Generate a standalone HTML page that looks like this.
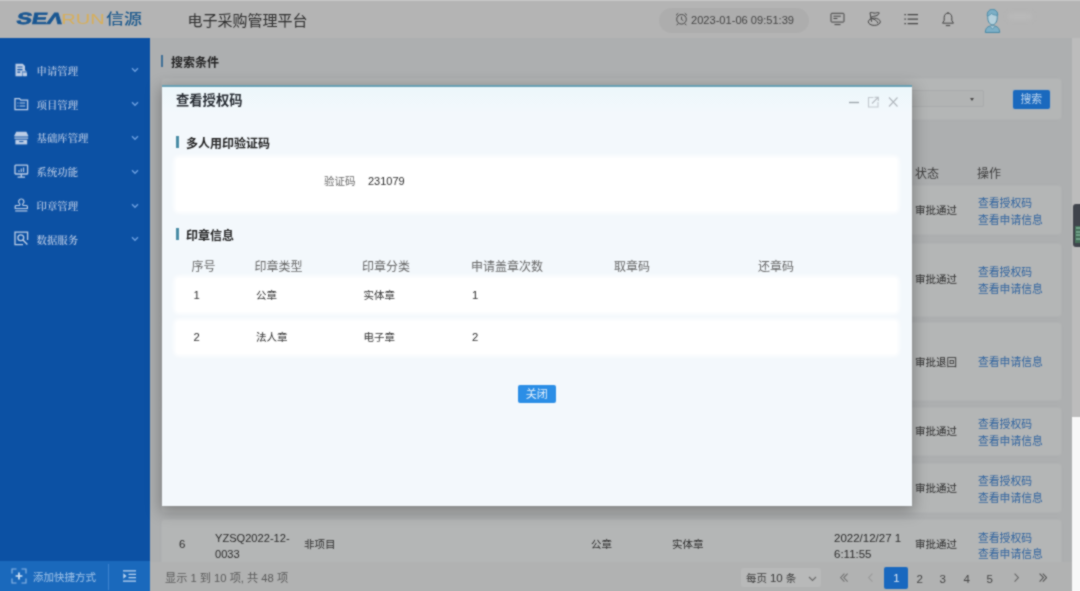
<!DOCTYPE html>
<html lang="zh-CN">
<head>
<meta charset="utf-8">
<title>电子采购管理平台</title>
<style>
*{box-sizing:border-box;margin:0;padding:0}
html,body{width:1080px;height:591px;overflow:hidden}
body{position:relative;background:#adafb0;font-family:"Liberation Sans","Noto Sans CJK SC",sans-serif;font-size:11px;color:#2a2a2a;filter:url(#soft)}
.abs{position:absolute}
/* header */
#hdr{position:absolute;left:0;top:0;width:1080px;height:38px;background:#b4b4b4;border-top:1px solid #c8c8c8}
#logo{position:absolute;left:15px;top:6px;height:24px;white-space:nowrap}
#ptitle{position:absolute;left:187.5px;top:8px;font-size:15px;color:#2e2e2e}
#clock{position:absolute;left:659px;top:6.5px;width:150px;height:25px;border-radius:13px;background:#adadad}
#clock span{position:absolute;left:32px;top:6.2px;font-size:11.1px;color:#444}
/* sidebar */
#side{position:absolute;left:0;top:38px;width:150px;height:553px;background:#0c51a4}
.mi{position:absolute;left:0;width:150px;height:20px;color:#b2c5e2;font-size:10.4px;font-family:"Liberation Serif","Noto Serif CJK SC",serif;font-weight:600}
.mi span{position:absolute;left:36.5px;top:2.5px;white-space:nowrap}
.mi svg.ic{position:absolute;left:14px;top:2px}
.mi svg.ch{position:absolute;left:131px;top:7px}
#sbot{position:absolute;left:0;top:522.6px;width:150px;height:31px;background:#1a69bc}
/* main bg */
.card{position:absolute;background:#b4b6b6;border-radius:3px;box-shadow:0 0 2px 1px rgba(180,182,182,.6)}
.th2{font-size:12px;color:#3d3d3d}
.st{font-size:10.5px;color:#2b2b2b;white-space:nowrap}
.lk{font-size:10.8px;color:#2f639f;line-height:16.8px;white-space:nowrap}
.pg{top:568px;width:12px;text-align:center;font-size:15px;color:#444}
/* modal */
#modal{position:absolute;left:161.5px;top:84.5px;width:750px;height:421.3px;background:linear-gradient(#ecf7fb 0,#f3f8fc 26px);border-top:2px solid #68a0b4;box-shadow:0 4px 14px 2px rgba(0,0,0,.28)}
.sec{position:absolute;font-weight:bold;font-size:12px;color:#1f1f1f}
.bar{position:absolute;width:2.5px;height:12px;background:#4a8da6}
.white{position:absolute;background:#fff;border-radius:3px;box-shadow:0 0 4px 1.5px #fff}
.th{position:absolute;font-size:12px;color:#666}
.td{position:absolute;font-size:10.5px;color:#2e2e2e;line-height:14px}
</style>
</head>
<body>
<svg width="0" height="0" style="position:absolute"><filter id="soft" x="0" y="0" width="100%" height="100%" color-interpolation-filters="sRGB"><feConvolveMatrix order="3" kernelMatrix="1 2 1 2 8 2 1 2 1" divisor="20" edgeMode="duplicate" preserveAlpha="true"/></filter></svg>
<div class="abs" style="left:0;top:0;width:1080px;height:591px;background:#adafb0"></div>
<div id="hdr">
  <svg id="logo" class="abs" style="left:12px;top:6px" width="140" height="26" viewBox="0 0 140 26">
    <text transform="translate(-1.8,18.6) skewX(-12)" x="0" y="0" font-family="Liberation Sans, sans-serif" font-weight="bold" font-size="17.5" fill="#1a5792" textLength="49.5" lengthAdjust="spacingAndGlyphs" stroke="#1a5792" stroke-width=".8">SEΛ</text>
    <text x="47.5" y="18.3" font-family="Liberation Sans, sans-serif" font-size="16.5" fill="#dcae4e" textLength="47" lengthAdjust="spacingAndGlyphs" opacity=".88">RUN</text>
    <text x="96" y="18.6" font-family="Liberation Sans, Noto Sans CJK SC, sans-serif" font-size="15.500" font-weight="500" fill="#1d5a8e" textLength="39" lengthAdjust="spacingAndGlyphs">信源</text>
  </svg>
  <div id="ptitle">电子采购管理平台</div>
  <div id="clock"><span>2023-01-06 09:51:39</span></div>
  <svg class="abs" style="left:675px;top:11px" width="13" height="14" viewBox="0 0 13 14"><circle cx="6.500" cy="7.300" r="4.800" fill="none" stroke="#484848" stroke-width="1"/><path d="M6.500 4.600v2.900l1.900 1.200" fill="none" stroke="#484848" stroke-width=".9"/><path d="M1 3.300l2.200-2M12 3.300l-2.200-2M3 11.600l-1.200 1.600M10 11.600l1.200 1.600" stroke="#484848" stroke-width="1"/></svg>
  <svg class="abs" style="left:830px;top:11px" width="15" height="14" viewBox="0 0 15 14"><rect x="1" y="1.300" width="13" height="8.800" rx=".8" fill="none" stroke="#444" stroke-width="1"/><path d="M3.400 4.200h7.400M3.400 6.500h4" stroke="#444" stroke-width="1"/><path d="M4.500 12.600h6" stroke="#444" stroke-width="1"/></svg>
  <svg class="abs" style="left:867px;top:10px" width="15" height="16" viewBox="0 0 15 16"><ellipse cx="7.300" cy="10.800" rx="6" ry="3.600" fill="none" stroke="#444" stroke-width="1"/><path d="M4.600 10.800L3 1.800" stroke="#444" stroke-width="1"/><path d="M3 1.800c2-1 3.400.8 5.400.3s2.800-.8 3.800-.3c-.5 1.800-1.600 2.600-3.200 3s-3.600.6-5.200 1.500" fill="none" stroke="#444" stroke-width="1"/><path d="M5.400 7.800c2.400.4 4.600 1.800 5.600 4.600" fill="none" stroke="#444" stroke-width="1"/></svg>
  <svg class="abs" style="left:904px;top:12px" width="14" height="12" viewBox="0 0 14 12"><path d="M3.600 1.500H14M3.600 6H14M3.600 10.500H14" stroke="#444" stroke-width="1.25"/><path d="M.4 1.500h1.500M.4 6h1.500M.4 10.500h1.500" stroke="#444" stroke-width="1.25"/></svg>
  <svg class="abs" style="left:941px;top:10px" width="14" height="16" viewBox="0 0 14 16"><path d="M7 2.200c-2.400 0-3.800 1.800-3.800 4.200v3L1.600 12.200h10.800L10.800 9.400v-3c0-2.400-1.400-4.200-3.800-4.200z" fill="none" stroke="#444" stroke-width="1"/><path d="M7 2.200V1M4.800 14.600h4.400" stroke="#444" stroke-width="1"/></svg>
  <svg class="abs" style="left:984px;top:7px" width="17" height="26" viewBox="0 0 17 26"><path d="M1.300 24.500c.2-4.600 2.300-6.600 7.200-6.600s7 2 7.200 6.600z" fill="#7dafc6" stroke="#4789a6" stroke-width="1"/><path d="M6 18.200l2.500 3 2.500-3" fill="#b4d0dc" stroke="#4789a6" stroke-width=".8"/><path d="M3.800 7.500C3.200 3.600 5.400 1.600 8.500 1.600s5.300 2 4.700 5.900c.5 5.600-1.600 9.200-4.700 9.200S3.300 13.100 3.800 7.500z" fill="#b4d0dc" stroke="#4789a6" stroke-width="1"/><path d="M3.200 7.800c1.800-.2 3.100-1 4.200-2.300 1.500 1.300 3.700 1.900 6.400 1.700C13.600 3.400 11.700 1.500 8.500 1.500S3 3.600 3.200 7.800z" fill="#7dafc6" stroke="#4789a6" stroke-width=".8"/></svg>
  <div class="abs" style="left:1008px;top:12px;width:24px;height:7px;background:#b9b9b9;filter:blur(2px);border-radius:3px"></div>
</div>
<div id="side">
  <div class="mi" style="top:22.0px"><svg class="ic" style="top:3.0px" width="14" height="14" viewBox="0 0 14 14"><path d="M1.5 0.8h7.2l2.3 2.3v5.2h-2.6v4.9H1.5z" fill="#bccde6"/><path d="M3.3 4h5.2M3.3 6.6h5.2M3.3 9.2h3" stroke="#0b4fa2" stroke-width="1.2"/><rect x="8.8" y="9.6" width="4.2" height="3.6" rx=".6" fill="#bccde6"/><path d="M9.8 9.6v-.9a1.1 1.1 0 0 1 2.2 0v.9" stroke="#bccde6" stroke-width=".9" fill="none"/></svg><span>申请管理</span><svg class="ch" width="8" height="6" viewBox="0 0 8 6"><path d="M1 1.200l3 3 3-3" fill="none" stroke="#6c9fe0" stroke-width="1.4"/></svg></div>
  <div class="mi" style="top:56.0px"><svg class="ic" style="top:2.5px" width="15" height="14" viewBox="0 0 15 14"><path d="M1 1.6h4.6l1.2 1.5H13.6v9.5H1z" fill="none" stroke="#bccde6" stroke-width="1.3"/><path d="M5.6 6h5.6M5.6 9h5.6" stroke="#bccde6" stroke-width="1.2"/><path d="M3.4 6h1M3.4 9h1" stroke="#bccde6" stroke-width="1.2"/></svg><span>项目管理</span><svg class="ch" width="8" height="6" viewBox="0 0 8 6"><path d="M1 1.200l3 3 3-3" fill="none" stroke="#6c9fe0" stroke-width="1.4"/></svg></div>
  <div class="mi" style="top:89.5px"><svg class="ic" style="top:3.0px" width="15" height="14" viewBox="0 0 15 14"><path d="M2.2 0.8h10.2l1.8 3.6v1.1H.4V4.4z" fill="#bccde6"/><path d="M.4 6.3h13.8v1.8H.4z" fill="#bccde6" opacity=".75"/><path d="M1.4 8.8h11.8v4.6H1.4z" fill="#bccde6"/><path d="M5.2 10.6h4.2" stroke="#0b4fa2" stroke-width="1"/></svg><span>基础库管理</span><svg class="ch" width="8" height="6" viewBox="0 0 8 6"><path d="M1 1.200l3 3 3-3" fill="none" stroke="#6c9fe0" stroke-width="1.4"/></svg></div>
  <div class="mi" style="top:123.5px"><svg class="ic" style="top:2.0px" width="15" height="15" viewBox="0 0 15 15"><rect x="1" y="1.2" width="12.6" height="8.8" rx=".6" fill="none" stroke="#bccde6" stroke-width="1.3"/><path d="M7.3 10v2.6M3.6 13.2h7.4" stroke="#bccde6" stroke-width="1.3"/><path d="M5 8V6.2M7.3 8V4.6M9.6 8V3.4" stroke="#bccde6" stroke-width="1.1"/></svg><span>系统功能</span><svg class="ch" width="8" height="6" viewBox="0 0 8 6"><path d="M1 1.200l3 3 3-3" fill="none" stroke="#6c9fe0" stroke-width="1.4"/></svg></div>
  <div class="mi" style="top:157.5px"><svg class="ic" style="top:2.3px" width="15" height="14" viewBox="0 0 15 14"><path d="M7.3 1a2.6 2.6 0 0 1 1.7 4.6c-.5.6-.4 1.6.2 1.9h3.2c.6 0 1 .4 1 1v2H1.200v-2c0-.6.4-1 1-1h3.2c.6-.3.7-1.300.2-1.900A2.600 2.600 0 0 1 7.300 1z" fill="none" stroke="#bccde6" stroke-width="1.2"/><path d="M1.200 12.900h12.200" stroke="#bccde6" stroke-width="1.200"/></svg><span>印章管理</span><svg class="ch" width="8" height="6" viewBox="0 0 8 6"><path d="M1 1.200l3 3 3-3" fill="none" stroke="#6c9fe0" stroke-width="1.4"/></svg></div>
  <div class="mi" style="top:191.0px"><svg class="ic" style="top:1.5px" width="15" height="15" viewBox="0 0 15 15"><path d="M13.600 9V1.200H1v12.400h8" fill="none" stroke="#bccde6" stroke-width="1.300"/><circle cx="6.800" cy="6.800" r="2.900" fill="none" stroke="#bccde6" stroke-width="1.300"/><path d="M9 9l4.400 4.600" stroke="#bccde6" stroke-width="1.400"/></svg><span>数据服务</span><svg class="ch" width="8" height="6" viewBox="0 0 8 6"><path d="M1 1.200l3 3 3-3" fill="none" stroke="#6c9fe0" stroke-width="1.4"/></svg></div>
  <div id="sbot"><svg class="abs" style="left:11px;top:7.5px" width="16" height="16" viewBox="0 0 16 16"><path d="M1 5.500V1h4.500M10.500 1H15v4.500M15 10.500V15h-4.500M5.500 15H1v-4.500" fill="none" stroke="#8fb8e6" stroke-width="1.100"/><path d="M8 4.600v6.800M4.600 8h6.800" stroke="#d4e4f6" stroke-width="1.700"/></svg><span class="abs" style="left:33px;top:8.5px;font-size:10.5px;color:#a3c4e8;white-space:nowrap">添加快捷方式</span><div class="abs" style="left:108px;top:3px;width:1px;height:26px;background:#3f83cf"></div><svg class="abs" style="left:123px;top:9.5px" width="13" height="12" viewBox="0 0 13 12"><path d="M0 .8h13M5.500 4.300H13M5.500 7.700H13M0 11.200h13" stroke="#bdd5f0" stroke-width="1.300"/><path d="M.3 3.300l3.300 2.700-3.300 2.700z" fill="#bdd5f0"/></svg></div>
</div>
<!-- background page content -->
<div id="main">
  <div class="abs" style="left:161px;top:55px;width:2px;height:12px;background:#3f6f96"></div>
  <div class="abs" style="left:171px;top:53px;font-size:12px;font-weight:bold;color:#232323">搜索条件</div>
  <div class="card" style="left:162px;top:79px;width:899px;height:40px"></div>
  <div class="abs" style="left:880px;top:90px;width:103.5px;height:17px;background:#b2b4b4;border:1px solid #a9abac;border-radius:2px"></div>
  <div class="abs" style="left:970px;top:98px;width:0;height:0;border-left:2.5px solid transparent;border-right:2.5px solid transparent;border-top:3.5px solid #484848"></div>
  <div class="abs" style="left:1012.5px;top:90px;width:37.5px;height:19px;background:#1a69be;border-radius:2px;color:#bcd4ee;font-size:10.8px;text-align:center;line-height:18.5px;box-shadow:0 0 2px rgba(120,170,230,.5)">搜索</div>
  <div class="abs th2" style="left:915px;top:164px">状态</div>
  <div class="abs th2" style="left:977px;top:164px">操作</div>
  <div class="card" style="left:162px;top:186px;width:899px;height:48px"></div>
  <div class="card" style="left:162px;top:243.5px;width:899px;height:72.5px"></div>
  <div class="card" style="left:162px;top:323px;width:899px;height:77px"></div>
  <div class="card" style="left:162px;top:407.5px;width:899px;height:47.5px"></div>
  <div class="card" style="left:162px;top:463.5px;width:899px;height:48.5px"></div>
  <div class="card" style="left:162px;top:519.5px;width:899px;height:50px"></div>
  <div class="abs st" style="left:915px;top:202px">审批通过</div>
  <div class="abs lk" style="left:978px;top:195px">查看授权码<br>查看申请信息</div>
  <div class="abs st" style="left:915px;top:271px">审批通过</div>
  <div class="abs lk" style="left:978px;top:264px">查看授权码<br>查看申请信息</div>
  <div class="abs st" style="left:915px;top:354px">审批退回</div>
  <div class="abs lk" style="left:978px;top:354px">查看申请信息</div>
  <div class="abs st" style="left:915px;top:423px">审批通过</div>
  <div class="abs lk" style="left:978px;top:416px">查看授权码<br>查看申请信息</div>
  <div class="abs st" style="left:915px;top:480px">审批通过</div>
  <div class="abs lk" style="left:978px;top:473px">查看授权码<br>查看申请信息</div>
  <div class="abs st" style="left:915px;top:536px">审批通过</div>
  <div class="abs lk" style="left:978px;top:529.5px">查看授权码<br>查看申请信息</div>
  <div class="abs st" style="left:179px;top:537.5px;font-size:11.5px">6</div>
  <div class="abs st" style="left:215px;top:531.3px;font-size:11.1px;line-height:15.2px">YZSQ2022-12-<br>0033</div>
  <div class="abs st" style="left:304px;top:536px">非项目</div>
  <div class="abs st" style="left:591px;top:536px">公章</div>
  <div class="abs st" style="left:672px;top:536px">实体章</div>
  <div class="abs st" style="left:834px;top:529.5px;font-size:11.5px;line-height:16px">2022/12/27 1<br>6:11:55</div>
  <!-- footer bar -->
  <div class="abs" style="left:150px;top:562px;width:922px;height:29px;background:#b1b2b2"></div>
  <div class="abs" style="left:165px;top:569px;font-size:11.2px;color:#5a5a5a;white-space:nowrap">显示 1 到 10 项, 共 48 项</div>
  <div class="abs" style="left:741px;top:568.3px;width:80.3px;height:18.6px;background:#b8b9b9;border-radius:2px"></div>
  <div class="abs" style="left:746px;top:570px;font-size:10.5px;color:#3a3a3a;white-space:nowrap">每页 <span style="font-size:11.5px">10</span> 条</div>
  <svg class="abs" style="left:807.500px;top:576px" width="9" height="6" viewBox="0 0 9 6"><path d="M1 1l3.500 3.500L8 1" fill="none" stroke="#6a6a6a" stroke-width="1.100"/></svg>
  <div class="abs" style="left:884.4px;top:567px;width:24px;height:22px;border-radius:2px;background:#1968bf;color:#dbe6f4;font-size:11.5px;text-align:center;line-height:23px">1</div>
  <svg class="abs" style="left:839.7px;top:573.4px" width="8" height="10" viewBox="0 0 8 10"><path d="M4.400 .6L.6 4.600l3.800 4M7.600 .6L3.800 4.600l3.800 4" fill="none" stroke="#737373" stroke-width="1.1"/></svg>
  <svg class="abs" style="left:868.2px;top:573.4px" width="5" height="10" viewBox="0 0 5 10"><path d="M4.400 .6L.6 4.600l3.800 4" fill="none" stroke="#999" stroke-width="1.1"/></svg>
  <svg class="abs" style="left:1013.5px;top:573.4px" width="5" height="10" viewBox="0 0 5 10"><path d="M.6 .6l3.8 4-3.8 4" fill="none" stroke="#666" stroke-width="1.1"/></svg>
  <svg class="abs" style="left:1039.2px;top:573.4px" width="8" height="10" viewBox="0 0 8 10"><path d="M.6 .6l3.8 4-3.8 4M3.8 .6l3.8 4-3.8 4" fill="none" stroke="#555" stroke-width="1.1"/></svg>
  <div class="abs pg" style="left:913.7px;font-size:11.5px;top:573px">2</div>
  <div class="abs pg" style="left:936.7px;font-size:11.5px;top:573px">3</div>
  <div class="abs pg" style="left:960.7px;font-size:11.5px;top:573px">4</div>
  <div class="abs pg" style="left:983.7px;font-size:11.5px;top:573px">5</div>
  <!-- scrollbar -->
  <div class="abs" style="left:1072px;top:38px;width:8px;height:553px;background:#f8f8f8"></div>
  <div class="abs" style="left:1072px;top:38px;width:8px;height:379px;background:#bcbcbc"></div>
  <div class="abs" style="left:1072.5px;top:203.5px;width:8px;height:43.5px;background:#40444c;border-radius:3px 0 0 3px"></div>
  <div class="abs" style="left:1074.5px;top:225.5px;width:6px;height:17px;background:#46705a"></div><div class="abs" style="left:1076px;top:226.5px;width:4px;height:15px;background:repeating-linear-gradient(#6f9f88 0 2px,#46705a 2px 3.7px)"></div>
</div>
<div id="modal"><div style="position:absolute;left:0.5px;top:1.5px;width:749px;height:0">
  <div class="sec" style="left:14px;top:2px;font-size:13.3px;color:#262b32">查看授权码</div>
  <svg class="abs" style="left:686px;top:7px" width="52" height="14" viewBox="0 0 52 14"><path d="M1 7.500h10" stroke="#9aa3aa" stroke-width="1.300"/><path d="M25.500 2.500H20.500v9.500h9.500V7" fill="none" stroke="#c2c8ce" stroke-width="1.100"/><path d="M24 8.500l6-6M26.500 2.200h3.800V6" fill="none" stroke="#b8bec4" stroke-width="1.100"/><path d="M41 2.500l8.500 9M49.500 2.500l-8.500 9" stroke="#b2b8be" stroke-width="1.100"/></svg>
  <div class="bar" style="left:14px;top:48px"></div>
  <div class="sec" style="left:24px;top:46px">多人用印验证码</div>
  <div class="white" style="left:14px;top:70px;width:720.5px;height:52.5px"></div>
  <div class="abs" style="left:162px;top:85px;font-size:10.5px;color:#6a6a6a">验证码</div>
  <div class="abs" style="left:206px;top:86.500px;font-size:11px;color:#2e2e2e">231079</div>
  <div class="bar" style="left:14px;top:140px"></div>
  <div class="sec" style="left:24px;top:138px">印章信息</div>
  <div class="th" style="left:29.5px;top:169px">序号</div>
  <div class="th" style="left:92.5px;top:169px">印章类型</div>
  <div class="th" style="left:200.0px;top:169px">印章分类</div>
  <div class="th" style="left:309.0px;top:169px">申请盖章次数</div>
  <div class="th" style="left:452.0px;top:169px">取章码</div>
  <div class="th" style="left:596.0px;top:169px">还章码</div>
  <div class="white" style="left:14px;top:190.300px;width:720.5px;height:34px"></div>
  <div class="white" style="left:14px;top:232.500px;width:720.5px;height:33.500px"></div>
  <div class="td" style="left:31.5px;top:199.500px;font-size:11.3px">1</div>
  <div class="td" style="left:94.0px;top:200px;font-size:10.5px">公章</div>
  <div class="td" style="left:201.5px;top:200px;font-size:10.5px">实体章</div>
  <div class="td" style="left:310.0px;top:199.500px;font-size:11.3px">1</div>
  <div class="td" style="left:31.5px;top:241.500px;font-size:11.3px">2</div>
  <div class="td" style="left:94.0px;top:241.500px;font-size:10.5px">法人章</div>
  <div class="td" style="left:201.5px;top:241.500px;font-size:10.5px">电子章</div>
  <div class="td" style="left:310.0px;top:241.500px;font-size:11.3px">2</div>
  <div class="abs" style="left:356px;top:296.700px;width:37.500px;height:18.300px;background:#2b8ee6;border-radius:2px;color:#e8f2fc;font-size:11px;text-align:center;line-height:18px">关闭</div>
</div></div>
</body>
</html>
